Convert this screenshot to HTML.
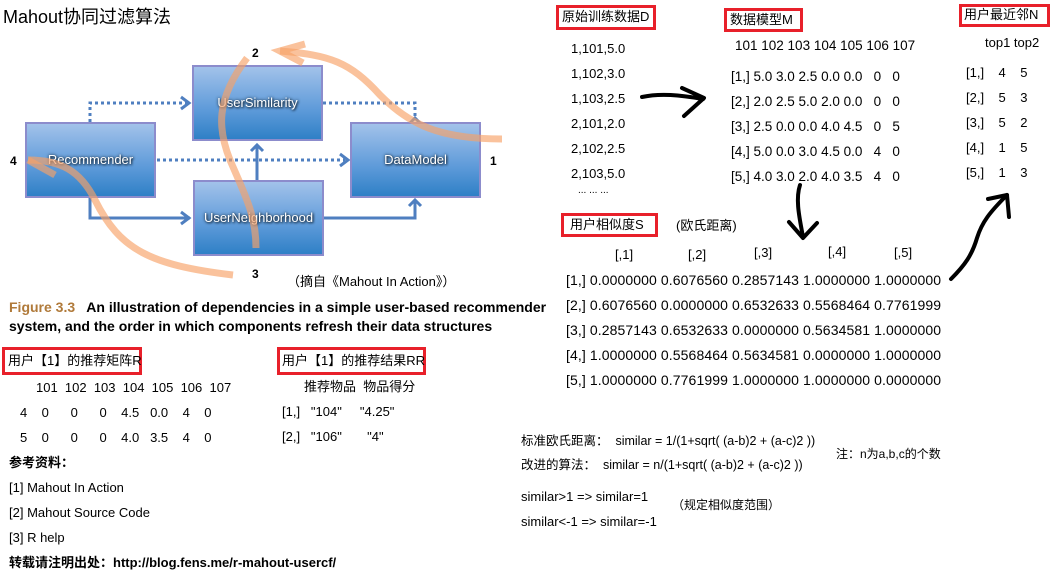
<!DOCTYPE html>
<html><head><meta charset="utf-8"><style>
body{margin:0;width:1058px;height:580px;background:#fff;position:relative;overflow:hidden;font-family:"Liberation Sans","Noto Sans CJK SC",sans-serif;font-size:13px;color:#000}
.t{position:absolute;white-space:pre;line-height:1}
.red{position:absolute;border:3px solid #e8202a;box-sizing:border-box}
.box{position:absolute;border:2px solid #8c8ccc;box-sizing:border-box;background:linear-gradient(#a2c2ea,#5d9ad9 60%,#2f80c6);color:#fff;text-align:center;font-size:13px;text-shadow:0 0 3px #123,1px 1px 2px #123}
.b{font-weight:bold}
</style></head><body>
<div class="t" style="left:3px;top:8px;font-size:18px">Mahout协同过滤算法</div>

<svg style="position:absolute;left:0;top:0" width="560" height="300">
<g stroke="#4f7fc0" stroke-width="3" fill="none">
<path d="M90 122 V103 H190" stroke-dasharray="3 3"/>
<path d="M323 103 H415 V118" stroke-dasharray="3 3"/>
<path d="M157 160 H345" stroke-dasharray="3 3"/>
<path d="M90 197 V218 H190"/>
<path d="M323 218 H415 V200"/>
<path d="M257 180 V145"/>
<path d="M181 97 L189 103 L181 109 M340 154 L348 160 L340 166 M181 212 L189 218 L181 224 M409 124 L415 118 L421 124 M409 206 L415 200 L421 206 M251 151 L257 145 L263 151"/>
</g>
</svg>
<div class="box" style="left:192px;top:65px;width:131px;height:76px;line-height:72px">UserSimilarity</div>
<div class="box" style="left:25px;top:122px;width:131px;height:76px;line-height:72px">Recommender</div>
<div class="box" style="left:350px;top:122px;width:131px;height:76px;line-height:72px">DataModel</div>
<div class="box" style="left:193px;top:180px;width:131px;height:76px;line-height:72px">UserNeighborhood</div>
<svg style="position:absolute;left:0;top:0" width="560" height="300">
<g stroke="#f7a267" stroke-opacity="0.65" stroke-width="7" fill="none">
<path d="M502 139 C440 139 410 125 380 95 C350 62 330 55 280 51"/>
<path d="M305 44 L280 51 L303 63"/>
<path d="M247 58 C215 100 218 130 230 160 C245 195 256 215 256 248"/>
<path d="M233 275 C150 265 120 250 95 200 C80 170 60 160 28 160"/>
<path d="M28 160 L55 175"/>
</g>
</svg>
<div class="t b" style="left:252px;top:47px;font-size:12px">2</div>
<div class="t b" style="left:10px;top:155px;font-size:12px">4</div>
<div class="t b" style="left:490px;top:155px;font-size:12px">1</div>
<div class="t b" style="left:252px;top:268px;font-size:12px">3</div>
<div class="t" style="left:287px;top:275px">（摘自《Mahout In Action》）</div>
<div class="t b" style="left:9px;top:300px;font-size:14px"><span style="color:#b07a3a">Figure 3.3</span>   An illustration of dependencies in a simple user-based recommender</div>
<div class="t b" style="left:9px;top:319px;font-size:14px">system, and the order in which components refresh their data structures</div>

<div class="red" style="left:2px;top:347px;width:140px;height:28px"></div>
<div class="t" style="left:8px;top:354px">用户【1】的推荐矩阵R</div>
<div class="red" style="left:277px;top:347px;width:149px;height:28px"></div>
<div class="t" style="left:282px;top:354px">用户【1】的推荐结果RR</div>
<div class="t" style="left:36px;top:381px">101  102  103  104  105  106  107</div>
<div class="t" style="left:20px;top:406px">4    0      0      0    4.5   0.0    4    0</div>
<div class="t" style="left:20px;top:431px">5    0      0      0    4.0   3.5    4    0</div>
<div class="t" style="left:304px;top:380px">推荐物品  物品得分</div>
<div class="t" style="left:282px;top:405px">[1,]   "104"     "4.25"</div>
<div class="t" style="left:282px;top:430px">[2,]   "106"       "4"</div>
<div class="t b" style="left:9px;top:456px">参考资料：</div>
<div class="t" style="left:9px;top:481px">[1] Mahout In Action</div>
<div class="t" style="left:9px;top:506px">[2] Mahout Source Code</div>
<div class="t" style="left:9px;top:531px">[3] R help</div>
<div class="t b" style="left:9px;top:556px">转载请注明出处：http://blog.fens.me/r-mahout-usercf/</div>

<div class="red" style="left:556px;top:5px;width:100px;height:25px"></div>
<div class="t" style="left:562px;top:10px">原始训练数据D</div>
<div class="t" style="left:571px;top:36px;line-height:25px">1,101,5.0
1,102,3.0
1,103,2.5
2,101,2.0
2,102,2.5
2,103,5.0</div>
<div class="t" style="left:578px;top:186px;font-size:10px">... ... ...</div>
<div class="red" style="left:724px;top:8px;width:79px;height:24px"></div>
<div class="t" style="left:730px;top:13px">数据模型M</div>
<div class="t" style="left:735px;top:39px;font-size:13.5px">101 102 103 104 105 106 107</div>
<div class="t" style="left:731px;top:64px;line-height:25px;font-size:13.5px">[1,] 5.0 3.0 2.5 0.0 0.0   0   0
[2,] 2.0 2.5 5.0 2.0 0.0   0   0
[3,] 2.5 0.0 0.0 4.0 4.5   0   5
[4,] 5.0 0.0 3.0 4.5 0.0   4   0
[5,] 4.0 3.0 2.0 4.0 3.5   4   0</div>
<div class="red" style="left:959px;top:4px;width:91px;height:23px"></div>
<div class="t" style="left:964px;top:8px">用户最近邻N</div>
<div class="t" style="left:985px;top:36px">top1 top2</div>
<div class="t" style="left:966px;top:60px;line-height:25px">[1,]    4    5
[2,]    5    3
[3,]    5    2
[4,]    1    5
[5,]    1    3</div>
<div class="red" style="left:561px;top:213px;width:97px;height:24px"></div>
<div class="t" style="left:570px;top:218px">用户相似度S</div>
<div class="t" style="left:676px;top:219px">(欧氏距离)</div>
<div class="t" style="left:615px;top:248px">[,1]</div>
<div class="t" style="left:688px;top:248px">[,2]</div>
<div class="t" style="left:754px;top:246px">[,3]</div>
<div class="t" style="left:828px;top:245px">[,4]</div>
<div class="t" style="left:894px;top:246px">[,5]</div>
<div class="t" style="left:566px;top:268px;line-height:25px;font-size:14px;letter-spacing:0.1px">[1,] 0.0000000 0.6076560 0.2857143 1.0000000 1.0000000
[2,] 0.6076560 0.0000000 0.6532633 0.5568464 0.7761999
[3,] 0.2857143 0.6532633 0.0000000 0.5634581 1.0000000
[4,] 1.0000000 0.5568464 0.5634581 0.0000000 1.0000000
[5,] 1.0000000 0.7761999 1.0000000 1.0000000 0.0000000</div>
<div class="t" style="left:521px;top:435px;font-size:12.5px">标准欧氏距离：  similar = 1/(1+sqrt( (a-b)2 + (a-c)2 ))</div>
<div class="t" style="left:521px;top:459px;font-size:12.5px">改进的算法：  similar = n/(1+sqrt( (a-b)2 + (a-c)2 ))</div>
<div class="t" style="left:836px;top:448px;font-size:12px">注：n为a,b,c的个数</div>
<div class="t" style="left:521px;top:490px;font-size:13px">similar&gt;1 =&gt; similar=1</div>
<div class="t" style="left:672px;top:499px;font-size:12px">（规定相似度范围）</div>
<div class="t" style="left:521px;top:515px;font-size:13px">similar&lt;-1 =&gt; similar=-1</div>

<svg style="position:absolute;left:0;top:0" width="1058" height="580">
<g stroke="#000" stroke-width="4" fill="none" stroke-linecap="round" stroke-linejoin="round">
<path d="M642 97 C660 93 680 95 703 99"/>
<path d="M682 88 L704 98 L684 116"/>
<path d="M800 185 C795 200 800 220 803 237"/>
<path d="M789 222 L803 238 L817 223"/>
<path d="M951 279 C965 265 972 255 977 238 C982 222 990 212 1007 195"/>
<path d="M988 199 L1007 195 L1009 217"/>
</g>
</svg>
</body></html>
